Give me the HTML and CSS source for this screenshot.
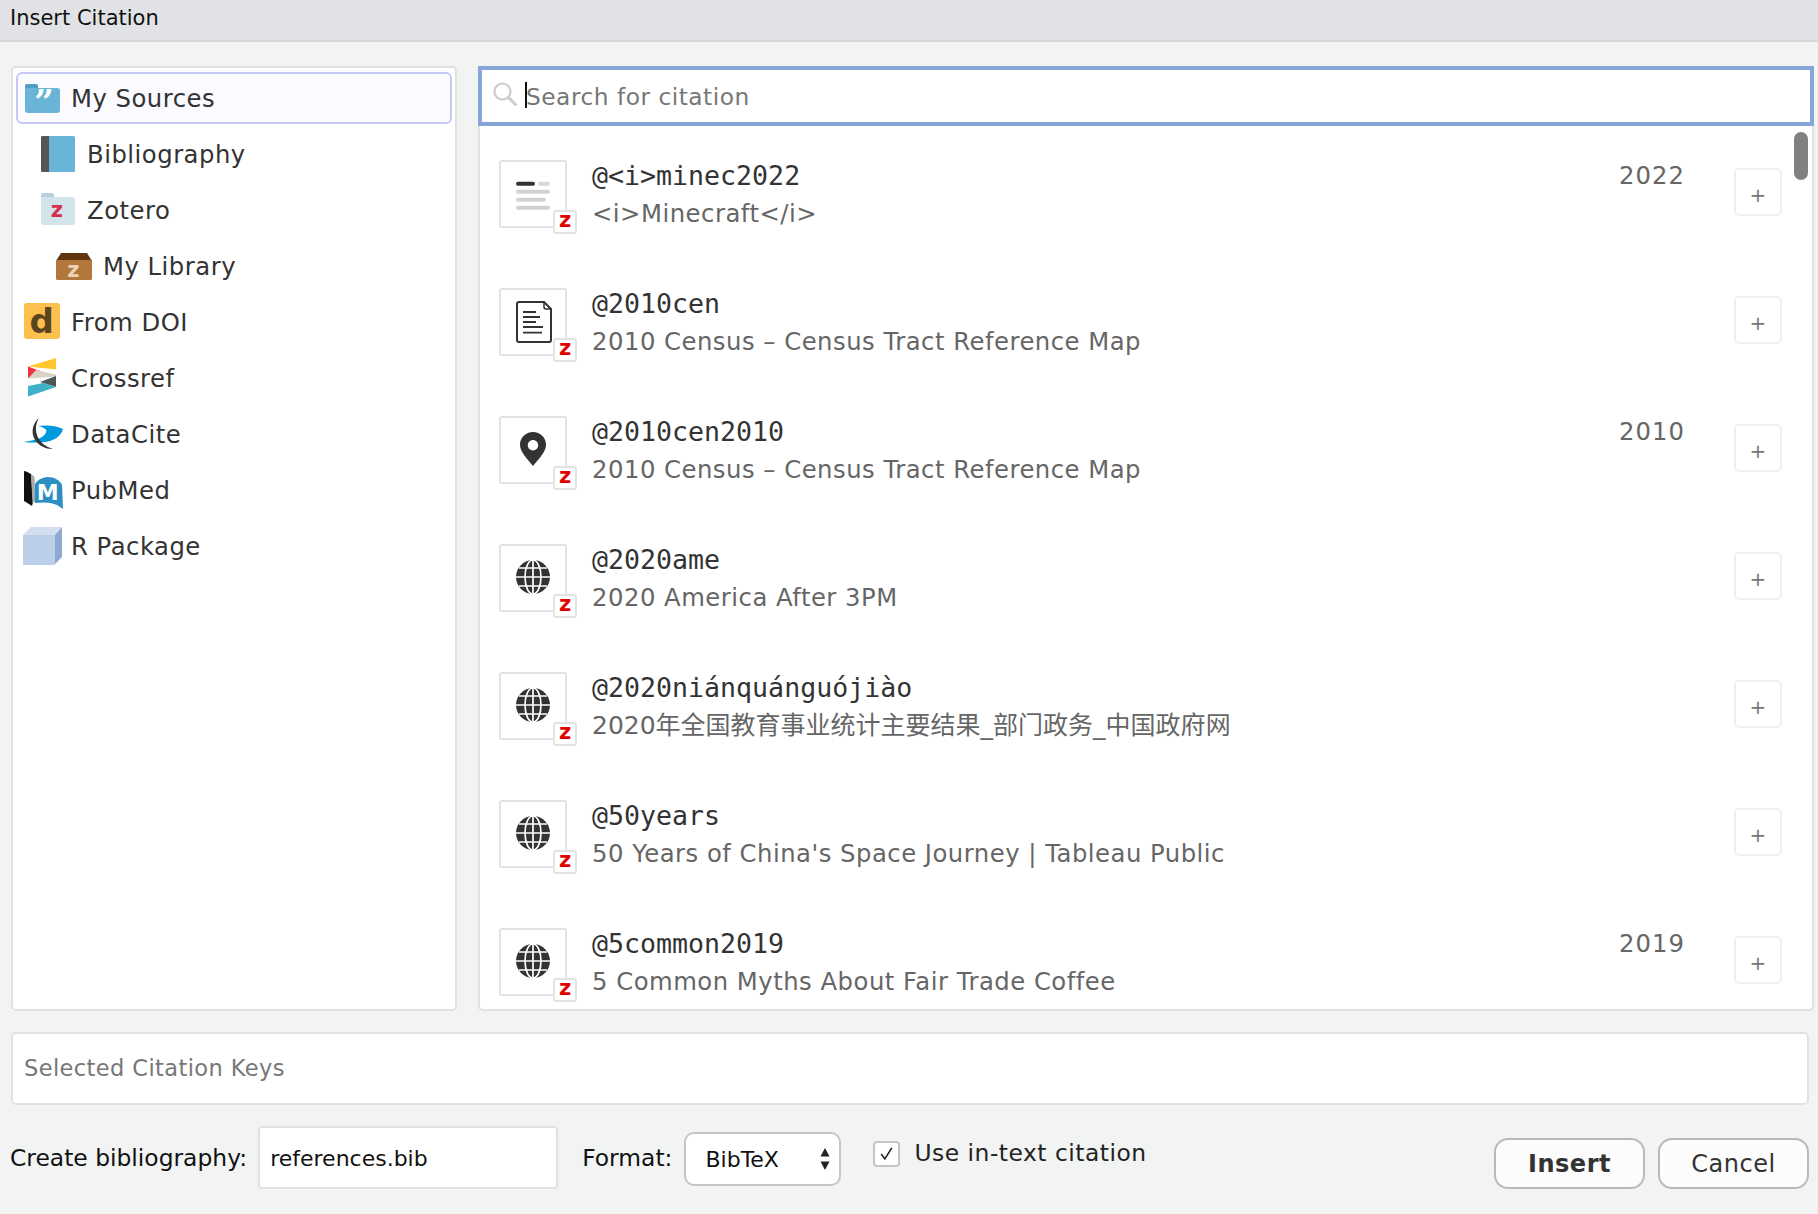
FILE: index.html
```html
<!DOCTYPE html>
<html lang="en">
<head>
<meta charset="utf-8">
<title>Insert Citation</title>
<link rel="stylesheet" href="styles.css">
</head>
<body>
<svg class="defs" width="0" height="0" aria-hidden="true">
  <symbol id="t-note" viewBox="0 0 64 64">
    <rect x="15" y="19.7" width="19" height="4" rx="2" fill="#333"/>
    <rect x="37" y="19.7" width="12" height="4" rx="2" fill="#d8d8d8"/>
    <rect x="15" y="27.7" width="34" height="4" rx="2" fill="#d2d2d2"/>
    <rect x="15" y="35.7" width="30" height="4" rx="2" fill="#d2d2d2"/>
    <rect x="15" y="43.7" width="34" height="4" rx="2" fill="#d2d2d2"/>
  </symbol>
  <symbol id="t-doc" viewBox="0 0 64 64">
    <path d="M18 12h25l7 7v31a2 2 0 0 1-2 2H18a2 2 0 0 1-2-2V14a2 2 0 0 1 2-2z" fill="#fff" stroke="#333" stroke-width="2"/>
    <path d="M43 12v5a2 2 0 0 0 2 2h5" fill="none" stroke="#333" stroke-width="1.5"/>
    <path d="M22 22h13M22 27h17M22 32h13M22 37h20M22 42.600h19" stroke="#333" stroke-width="1.8"/>
  </symbol>
  <symbol id="t-pin" viewBox="0 0 64 64">
    <path fill-rule="evenodd" d="M32 14c-7.200 0-13 5.600-13 12.700 0 8 8.500 15 13 21.300 4.500-6.300 13-13.300 13-21.300C45 19.600 39.200 14 32 14zm0 8c2.900 0 5.200 2.300 5.200 5.200s-2.300 5.200-5.200 5.200-5.200-2.300-5.200-5.200 2.300-5.200 5.200-5.200z" fill="#333"/>
  </symbol>
  <symbol id="t-globe" viewBox="0 0 64 64">
    <circle cx="32" cy="31" r="17" fill="#333"/>
    <g fill="none" stroke="#fff" stroke-width="1.700">
      <ellipse cx="32" cy="31" rx="8" ry="17"/>
      <path d="M32 14v34M15 31h34M18 22h28M18 40h28"/>
    </g>
  </symbol>
</svg>

<header class="titlebar">Insert Citation</header>

<main class="panes">
  <nav class="sources">
    <div class="source selected">
      <svg class="src-icon" viewBox="0 0 40 40"><path d="M2 8a2 2 0 0 1 2-2h9a2 2 0 0 1 2 2v3H2z" fill="#4f9cc5"/><rect x="2" y="10" width="35" height="25" rx="3" fill="#69b4d7"/><text class="q-mark" x="19.500" y="36">”</text></svg>
      <span>My Sources</span>
    </div>
    <div class="source depth1">
      <svg class="src-icon" viewBox="0 0 40 40"><rect x="2" y="2" width="34" height="36" rx="1.500" fill="#69b4d7"/><path d="M3.500 2H10v36H3.500A1.500 1.500 0 0 1 2 36.500v-33A1.500 1.500 0 0 1 3.500 2z" fill="#555"/></svg>
      <span>Bibliography</span>
    </div>
    <div class="source depth1">
      <svg class="src-icon" viewBox="0 0 40 40"><path d="M2 5a2 2 0 0 1 2-2h9a2 2 0 0 1 2 2v3H2z" fill="#b7cfdd"/><path d="M2 7h31a3 3 0 0 1 3 3v22a3 3 0 0 1-3 3H5a3 3 0 0 1-3-3z" fill="#d3e3ec"/><text class="z-red" x="18" y="27">z</text></svg>
      <span>Zotero</span>
    </div>
    <div class="source depth2">
      <svg class="src-icon" viewBox="0 0 40 40"><path d="M6 7h26l5 8H1z" fill="#60350f"/><rect x="1" y="14" width="36" height="20" rx="1.500" fill="#b2773a"/><text class="z-tan" x="18.500" y="31">z</text></svg>
      <span>My Library</span>
    </div>
    <div class="source">
      <svg class="src-icon" viewBox="0 0 40 40"><rect x="1" y="1" width="36" height="36" rx="3" fill="#fdbf4d"/><text class="d-mark" x="19" y="31">d</text></svg>
      <span>From DOI</span>
    </div>
    <div class="source">
      <svg class="src-icon" viewBox="0 0 40 40"><path d="M5 8.500 33 0v11.500z" fill="#ffc72c"/><path d="M5 8.500 20 14 5 20z" fill="#ef3340"/><path d="M13 12 33 16.500v2L5 20.500z" fill="#d8d2c4"/><path d="M33 18v11L17 24z" fill="#4f5858"/><path d="M5 28 20 25l13 4L5 38.500z" fill="#3eb1c8"/></svg>
      <span>Crossref</span>
    </div>
    <div class="source">
      <svg class="src-icon" viewBox="0 0 40 40"><path d="M0 28c5-.5 9-1.500 13-2.500 6-1.500 10-5 10.500-9C22 14 18 12.500 15 12c7-1 18-1 25 3-2 8-10 12-18 13-8 1-15 .5-22 0z" fill="#0099dd"/><path d="M16 4C10 9 8 17 11 24c3 6 9 11 19 11-7-2-14-7-16-14-2-6-1-12 2-17z" fill="#333"/></svg>
      <span>DataCite</span>
    </div>
    <div class="source">
      <svg class="src-icon" viewBox="0 0 40 40"><path d="M1 1c3 .5 5 2 7 3l2 28-1 4c-3-2-6-4-8-5z" fill="#111"/><path d="M8 4c1 1 3 2 3.500 3l1 24-3 2z" fill="#aaa"/><path d="M12 33 12 14c3-5 9-7 13-7 6 0 12 3 14 8l1 24-6-4c-6-3-14-3-22-2z" fill="#2b8fc4"/><text class="m-mark" x="25" y="30">M</text></svg>
      <span>PubMed</span>
    </div>
    <div class="source">
      <svg class="src-icon" viewBox="0 0 40 40"><path d="M0 9 8 1h31l-7 8z" fill="#d3dfee"/><rect x="0" y="9" width="32" height="30" fill="#bbcfe8"/><path d="M32 9l7-8v30l-7 7z" fill="#8ea8cf"/></svg>
      <span>R Package</span>
    </div>
  </nav>

  <section class="results">
    <div class="search">
      <svg class="search-icon" viewBox="0 0 24 24"><circle cx="9.500" cy="9.500" r="8" fill="none" stroke="#ccc" stroke-width="2.200"/><path d="M15.500 15.500l7 7" stroke="#ccc" stroke-width="3" stroke-linecap="round"/></svg>
      <span class="caret"></span>
      <span class="search-hint">Search for citation</span>
    </div>
    <div class="list">
      <article class="cite">
        <div class="card"><svg class="card-icon"><use href="#t-note"/></svg><span class="badge">z</span></div>
        <div class="cite-text"><div class="key">@&lt;i&gt;minec2022</div><div class="sub">&lt;i&gt;Minecraft&lt;/i&gt;</div></div>
        <div class="year">2022</div>
        <button class="add">+</button>
      </article>
      <article class="cite">
        <div class="card"><svg class="card-icon"><use href="#t-doc"/></svg><span class="badge">z</span></div>
        <div class="cite-text"><div class="key">@2010cen</div><div class="sub">2010 Census – Census Tract Reference Map</div></div>
        <div class="year"></div>
        <button class="add">+</button>
      </article>
      <article class="cite">
        <div class="card"><svg class="card-icon"><use href="#t-pin"/></svg><span class="badge">z</span></div>
        <div class="cite-text"><div class="key">@2010cen2010</div><div class="sub">2010 Census – Census Tract Reference Map</div></div>
        <div class="year">2010</div>
        <button class="add">+</button>
      </article>
      <article class="cite">
        <div class="card"><svg class="card-icon"><use href="#t-globe"/></svg><span class="badge">z</span></div>
        <div class="cite-text"><div class="key">@2020ame</div><div class="sub">2020 America After 3PM</div></div>
        <div class="year"></div>
        <button class="add">+</button>
      </article>
      <article class="cite">
        <div class="card"><svg class="card-icon"><use href="#t-globe"/></svg><span class="badge">z</span></div>
        <div class="cite-text"><div class="key">@2020niánquánguójiào</div><div class="sub cjk">2020年全国教育事业统计主要结果_部门政务_中国政府网</div></div>
        <div class="year"></div>
        <button class="add">+</button>
      </article>
      <article class="cite">
        <div class="card"><svg class="card-icon"><use href="#t-globe"/></svg><span class="badge">z</span></div>
        <div class="cite-text"><div class="key">@50years</div><div class="sub">50 Years of China's Space Journey | Tableau Public</div></div>
        <div class="year"></div>
        <button class="add">+</button>
      </article>
      <article class="cite">
        <div class="card"><svg class="card-icon"><use href="#t-globe"/></svg><span class="badge">z</span></div>
        <div class="cite-text"><div class="key">@5common2019</div><div class="sub">5 Common Myths About Fair Trade Coffee</div></div>
        <div class="year">2019</div>
        <button class="add">+</button>
      </article>
      <div class="scroll-thumb"></div>
    </div>
  </section>
</main>

<div class="selected-keys">Selected Citation Keys</div>

<footer class="actions">
  <label class="field-label">Create bibliography:</label>
  <div class="bib-input">references.bib</div>
  <label class="field-label format-label">Format:</label>
  <div class="select">
    <span>BibTeX</span>
    <svg class="select-arrows" viewBox="0 0 10 22"><path d="M5 0l4.500 8.500h-9zM5 22l-4.500-8.500h9z" fill="#222"/></svg>
  </div>
  <div class="check"><svg viewBox="0 0 27 27"><path d="M7 13.500l4.500 6L20 6" fill="none" stroke="#222" stroke-width="2"/></svg></div>
  <span class="check-label">Use in-text citation</span>
  <button class="btn primary">Insert</button>
  <button class="btn">Cancel</button>
</footer>
</body>
</html>
```

FILE: styles.css
```css
* { box-sizing: border-box; }
html, body { height: 100%; }
body {
  margin: 0;
  background: #f2f4f3;
  color: #333;
  font-family: "DejaVu Sans", "Noto Sans CJK SC", sans-serif;
  overflow: hidden;
}
.defs { position: absolute; }

.titlebar {
  height: 42px;
  padding: 2px 0 0 10px;
  background: #e0e2e5;
  border-bottom: 2px solid #d6d8da;
  color: #111;
  font-size: 21px;
  line-height: 32px;
}

.panes {
  display: flex;
  gap: 21px;
  height: 945px;
  margin: 24px 4px 0 11px;
}

.sources {
  flex: 0 0 446px;
  display: flex;
  flex-direction: column;
  gap: 4px;
  padding: 4px 3px;
  background: #fff;
  border: 2px solid #e0e1e1;
  border-radius: 5px;
}
.source {
  display: flex;
  align-items: center;
  gap: 8px;
  height: 52px;
  flex: none;
  padding-left: 5px;
  border: 2px solid transparent;
  border-radius: 6px;
  font-size: 24.300px;
  letter-spacing: .5px;
}
.source.selected { background: #fbfaff; border-color: #c6c9f5; }
.source.depth1 { padding-left: 21px; }
.source.depth2 { padding-left: 37px; }
.src-icon { flex: none; width: 40px; height: 40px; overflow: visible; }
.q-mark { fill: #fff; font: bold 34px "DejaVu Serif", serif; text-anchor: middle; letter-spacing: -3px; }
.z-red { fill: #d6304a; font: bold 21px "DejaVu Sans", sans-serif; text-anchor: middle; }
.z-tan { fill: #ecd3b3; font: bold 21px "DejaVu Sans", sans-serif; text-anchor: middle; }
.d-mark { fill: #5a4520; font: bold 34px "DejaVu Sans", sans-serif; text-anchor: middle; }
.m-mark { fill: #fff; font: bold 22px "DejaVu Sans", sans-serif; text-anchor: middle; }

.results {
  flex: 1;
  min-width: 0;
  display: flex;
  flex-direction: column;
  position: relative;
  background: #fff;
  border: 2px solid #e0e1e1;
  border-top: 0;
  border-radius: 0 0 5px 5px;
}
.search {
  position: relative;
  flex: none;
  height: 60px;
  margin: 0 -2px;
  display: flex;
  align-items: center;
  padding-left: 11px;
  background: #fff;
  border: 4px solid #85a6d8;
}
.search-icon { flex: none; width: 24px; height: 24px; margin: -4px 9px 0 0; }
.caret { flex: none; width: 2px; height: 26px; margin: -3px 0 0 -1px; background: #111; }
.search-hint { margin-left: -1px; color: #777; font-size: 23.300px; letter-spacing: .5px; }

.list {
  position: relative;
  flex: 1;
  min-height: 0;
  overflow: hidden;
  padding: 34px 0 0 19px;
}
.scroll-thumb {
  position: absolute;
  top: 6px;
  right: 4px;
  width: 14px;
  height: 48px;
  border-radius: 7px;
  background: #808080;
}
.cite {
  display: flex;
  align-items: flex-start;
  height: 128px;
}
.card {
  position: relative;
  flex: none;
  width: 68px;
  height: 68px;
  background: #fff;
  border: 2px solid #e3e3e3;
  border-radius: 3px;
}
.card-icon { display: block; width: 64px; height: 64px; }
.badge {
  position: absolute;
  right: -12px;
  bottom: -8px;
  width: 24px;
  height: 24px;
  background: #fff;
  border: 2px solid #e3e3e3;
  border-radius: 3px;
  color: #e00000;
  font: 900 21px/17px "DejaVu Sans", sans-serif;
  text-align: center;
}
.cite-text { flex: 1; min-width: 0; margin: -3px 0 0 25px; }
.key {
  height: 38px;
  color: #333;
  font-family: "DejaVu Sans Mono", "Liberation Mono", monospace;
  font-size: 26.600px;
  line-height: 38px;
}
.sub {
  height: 38px;
  color: #666;
  font-size: 24.300px;
  line-height: 38px;
  letter-spacing: .5px;
}
.sub.cjk { letter-spacing: 0; font-size: 25px; }
.year {
  flex: none;
  width: 66px;
  margin: -3px 49px 0 0;
  color: #666;
  font-size: 24.300px;
  line-height: 38px;
  letter-spacing: 1px;
}
.add {
  flex: none;
  width: 48px;
  height: 48px;
  margin: 8px 30px 0 0;
  padding: 6px 0 0;
  background: #fff;
  border: 2px solid #f0f0f0;
  border-radius: 5px;
  color: #777;
  font: 20px/1 "DejaVu Sans", sans-serif;
}

.selected-keys {
  height: 73px;
  margin: 21px 9px 0 11px;
  padding-left: 11px;
  background: #fff;
  border: 2px solid #e0e1e1;
  border-radius: 5px;
  color: #777;
  font-size: 22.500px;
  line-height: 69px;
  letter-spacing: .4px;
}

.actions {
  display: flex;
  align-items: flex-start;
  height: 63px;
  margin: 21px 9px 0 10px;
}
.field-label {
  margin-top: 15px;
  color: #111;
  font-size: 23.400px;
  line-height: 34px;
  white-space: nowrap;
}
.bib-input {
  flex: none;
  width: 300px;
  height: 63px;
  margin-left: 11px;
  padding-left: 10px;
  background: #fff;
  border: 2px solid #e0e1e1;
  border-radius: 4px;
  color: #111;
  font-size: 22px;
  line-height: 62px;
}
.format-label { margin-left: 24px; }
.select {
  flex: none;
  display: flex;
  align-items: center;
  justify-content: space-between;
  width: 157px;
  height: 54px;
  margin: 6px 0 0 12px;
  padding: 0 9px 0 19px;
  background: #fff;
  border: 2px solid #c3c5c6;
  border-radius: 10px;
  color: #111;
  font-size: 22px;
}
.select-arrows { width: 10px; height: 22px; }
.check {
  flex: none;
  width: 27px;
  height: 26px;
  margin: 15px 0 0 32px;
  background: #fff;
  border: 2px solid #c3c5c6;
  border-radius: 4px;
}
.check svg { display: block; width: 23px; height: 22px; }
.check-label {
  margin: 10px 0 0 14px;
  color: #222;
  font-size: 23.400px;
  line-height: 34px;
  letter-spacing: .5px;
}
.btn {
  flex: none;
  width: 151px;
  height: 51px;
  margin: 12px 0 0 13px;
  background: #fcfcfc;
  border: 2px solid #b8baba;
  border-radius: 14px;
  color: #333;
  font: 24px/1 "DejaVu Sans", sans-serif;
  letter-spacing: .5px;
}
.btn.primary { margin-left: auto; font-weight: 700; }
```
